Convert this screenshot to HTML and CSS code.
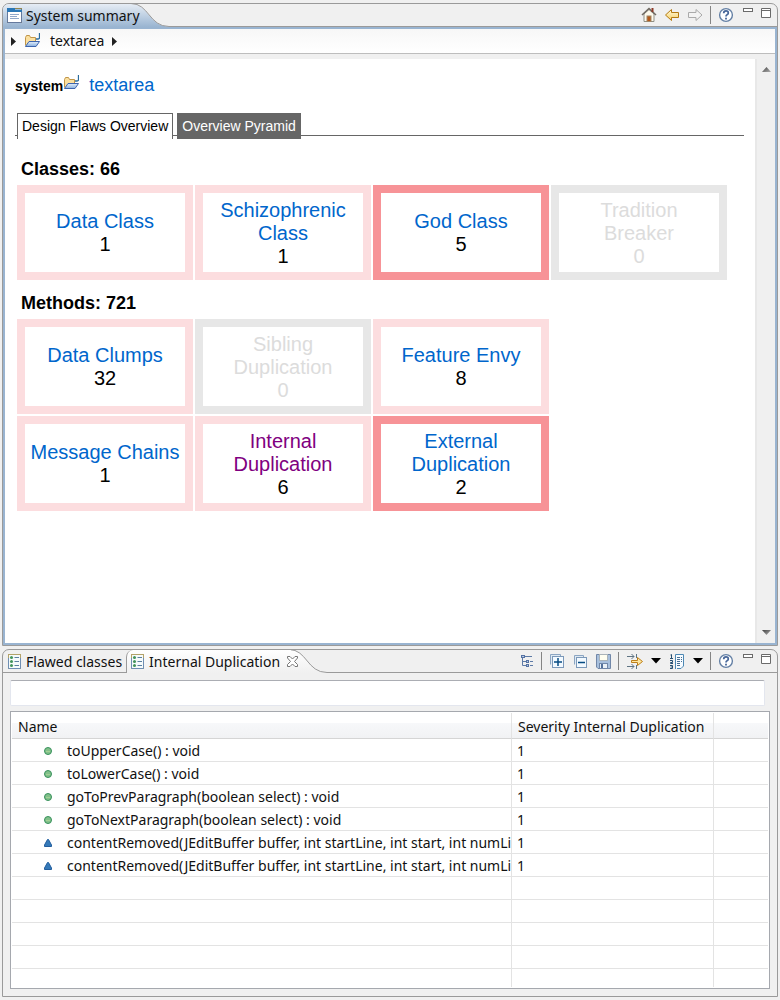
FILE: index.html
```html
<!DOCTYPE html>
<html lang="en">
<head>
<meta charset="utf-8">
<title>System summary</title>
<link rel="stylesheet" href="styles.css">
</head>
<body>
<svg class="defs" aria-hidden="true">
  <defs>
    <linearGradient id="tabBlue" x1="0" y1="0" x2="0" y2="1"><stop offset="0" stop-color="#e6edf5"/><stop offset="1" stop-color="#99b4d1"/></linearGradient>
    <linearGradient id="tabWhite" x1="0" y1="0" x2="0" y2="1"><stop offset="0" stop-color="#ffffff"/><stop offset="1" stop-color="#f0f0f0"/></linearGradient>
    <linearGradient id="folderFront" x1="0" y1="0" x2="0" y2="1"><stop offset="0" stop-color="#e4effb"/><stop offset="1" stop-color="#86aede"/></linearGradient>
    <linearGradient id="arrowGold" x1="0" y1="0" x2="0" y2="1"><stop offset="0" stop-color="#fffbe0"/><stop offset="1" stop-color="#f8cf62"/></linearGradient>
    <linearGradient id="scrollUp" x1="0" y1="0" x2="1" y2="1"><stop offset="0" stop-color="#404040"/><stop offset="1" stop-color="#b0b0b0"/></linearGradient>
    <symbol id="folder" viewBox="0 0 16 16">
      <path d="M1.500 12.500V4.500L2.500 2.500H5.500L6.500 4.500H11.500V8" fill="#fbe0a0" stroke="#c09548"/>
      <path d="M1.500 13.500L5 8.500H15.500L12 13.500Z" fill="url(#folderFront)" stroke="#3c64ae"/>
      <path d="M15.500 0V4.500Q15.500 6 14 6H12" fill="none" stroke="#2b6c9c" stroke-width="1.300"/>
    </symbol>
    <symbol id="list" viewBox="0 0 14 16">
      <rect x=".5" y=".5" width="12" height="14" fill="#f6fbfb" stroke="#b3a36a"/>
      <path d="M.5 4V14.500H12.500V4" fill="none" stroke="#6f8fb4"/>
      <circle cx="3.500" cy="3.500" r="1.500" fill="#43945b"/><circle cx="3.500" cy="7.500" r="1.500" fill="#43945b"/><circle cx="3.500" cy="11.500" r="1.500" fill="#43945b"/>
      <path d="M6.500 3.500H11M6.500 7.500H11M6.500 11.500H11" stroke="#5a7fa0"/>
    </symbol>
    <symbol id="help" viewBox="0 0 16 16">
      <circle cx="8" cy="8" r="6.400" fill="#fff" stroke="#6480a5" stroke-width="1.400"/>
      <path d="M5.700 6.300Q5.700 3.900 8 3.900Q10.300 3.900 10.300 5.900Q10.300 7 9 7.700Q8 8.200 8 9.500" fill="none" stroke="#47679a" stroke-width="1.700"/>
      <rect x="7.100" y="10.700" width="1.800" height="1.800" fill="#47679a"/>
    </symbol>
    <symbol id="minimize" viewBox="0 0 16 16"><rect x="2.500" y="1.500" width="9" height="3" fill="#fff" stroke="#6b6b6b"/></symbol>
    <symbol id="maximize" viewBox="0 0 16 16"><path d="M2.500 1.500H11.500V10.500H2.500Z" fill="#fff" stroke="#6b6b6b"/><path d="M2 3.500H12" stroke="#6b6b6b"/></symbol>
    <symbol id="method" viewBox="0 0 8 8"><circle cx="4" cy="4" r="3.500" fill="#82c08a" stroke="#37905c"/><path d="M2 4.500H6" stroke="#a2d094"/></symbol>
    <symbol id="package" viewBox="0 0 8 8"><path d="M3.500 .5H4.500L7.500 6V7.500H.5V6Z" fill="#3579b8" stroke="#235e9e"/></symbol>
  </defs>
</svg>

<section class="panel panel-main">
  <header class="bar">
    <button class="tab tab-blue"><svg class="tab-icon" width="15" height="15" viewBox="0 0 15 15"><rect x=".5" y=".5" width="14" height="14" fill="#fff" stroke="#94854f"/><path d="M.5 4V14.500H14.500V4" fill="none" stroke="#65799d"/><path d="M0 0H8V1.500H15V4H0Z" fill="#2b77b6"/><path d="M3 6.500H12M3 8.500H10M3 10.500H12" stroke="#91a8cb"/></svg>System summary</button>
    <svg class="curve" width="38" height="23" viewBox="0 0 38 23"><path d="M0 0C18 0 18 22.500 38 22.500V23H0Z" fill="url(#tabBlue)"/><path d="M0 -.5C18 -.5 18 22.500 38 22.500" fill="none" stroke="#9a9a9a"/></svg>
    <div class="tools">
      <button class="tool" aria-label="Home"><svg width="16" height="16" viewBox="0 0 16 16"><path d="M3 7L8 2.500L13 7V14.500H3Z" fill="#fdf9ec" stroke="#8f8f86"/><path d="M1 8L8 1.500L15 8" fill="none" stroke="#716b63" stroke-width="1.600"/><path d="M11.500 1V5" stroke="#8e3a28" stroke-width="2"/><rect x="6" y="9" width="4" height="5.500" fill="#b45819" stroke="#a08869"/></svg></button>
      <button class="tool" aria-label="Back"><svg width="16" height="16" viewBox="0 0 16 16"><path d="M1.500 8L7.500 2.500V5.500H14.500V10.500H7.500V13.500Z" fill="url(#arrowGold)" stroke="#b47a11"/></svg></button>
      <button class="tool" aria-label="Forward" disabled><svg width="16" height="16" viewBox="0 0 16 16"><path d="M15 8L9 2.500V5.500H1.500V10.500H9V13.500Z" fill="#f3f3f3" stroke="#aaa"/></svg></button>
      <span class="sep"></span>
      <button class="tool" aria-label="Help"><svg width="16" height="16"><use href="#help"/></svg></button>
      <span class="window-tools">
        <button class="tool" aria-label="Minimize"><svg width="16" height="16"><use href="#minimize"/></svg></button>
        <button class="tool" aria-label="Maximize"><svg width="16" height="16"><use href="#maximize"/></svg></button>
      </span>
    </div>
  </header>
  <div class="frame">
    <nav class="crumbs" aria-label="Breadcrumb">
      <svg width="5" height="9" viewBox="0 0 5 9"><path d="M0 0L5 4.500L0 9Z" fill="#222"/></svg>
      <svg class="crumb-icon" width="16" height="16"><use href="#folder"/></svg>
      <span>textarea</span>
      <svg width="5" height="9" viewBox="0 0 5 9"><path d="M0 0L5 4.500L0 9Z" fill="#222"/></svg>
    </nav>
    <div class="view">
      <main class="page">
        <h1 class="subject">system<svg width="16" height="16"><use href="#folder"/></svg><a href="#">textarea</a></h1>
        <div class="switch">
          <button class="switch-on">Design Flaws Overview</button>
          <button class="switch-off">Overview Pyramid</button>
        </div>
        <h2>Classes: 66</h2>
        <div class="cards cards-4">
          <div class="card"><a href="#">Data Class</a><span>1</span></div>
          <div class="card"><a href="#">Schizophrenic Class</a><span>1</span></div>
          <div class="card severe"><a href="#">God Class</a><span>5</span></div>
          <div class="card none"><span>Tradition Breaker</span><span>0</span></div>
        </div>
        <h2>Methods: 721</h2>
        <div class="cards cards-3">
          <div class="card"><a href="#">Data Clumps</a><span>32</span></div>
          <div class="card none"><span>Sibling Duplication</span><span>0</span></div>
          <div class="card"><a href="#">Feature Envy</a><span>8</span></div>
          <div class="card"><a href="#">Message Chains</a><span>1</span></div>
          <div class="card"><a class="seen" href="#">Internal Duplication</a><span>6</span></div>
          <div class="card severe"><a href="#">External Duplication</a><span>2</span></div>
        </div>
      </main>
      <div class="scroll">
        <button class="tool" aria-label="Scroll up"><svg width="9" height="5" viewBox="0 0 9 5"><path d="M0 5L4.500 0L9 5Z" fill="url(#scrollUp)"/></svg></button>
        <button class="tool" aria-label="Scroll down"><svg width="9" height="5" viewBox="0 0 9 5"><path d="M0 0L4.500 5L9 0Z" fill="url(#scrollUp)"/></svg></button>
      </div>
    </div>
  </div>
</section>

<section class="panel">
  <header class="bar">
    <button class="tab tab-idle"><svg class="tab-icon" width="14" height="16"><use href="#list"/></svg>Flawed classes</button>
    <button class="tab tab-white"><svg class="tab-icon" width="14" height="16"><use href="#list"/></svg>Internal Duplication<svg class="close" width="11" height="11" viewBox="0 0 11 11"><path d="M.5 .5H3L5.500 3L8 .5H10.500V2L7.500 5.500L10.500 8.500V10.500H8L5.500 8L3 10.500H.5V8.500L3.500 5.500L.5 2Z" fill="#fff" stroke="#777"/></svg></button>
    <svg class="curve" width="38" height="23" viewBox="0 0 38 23"><path d="M0 0C18 0 18 22.500 38 22.500V23H0Z" fill="url(#tabWhite)"/><path d="M0 -.5C18 -.5 18 22.500 38 22.500" fill="none" stroke="#9a9a9a"/></svg>
    <div class="tools">
      <button class="tool" aria-label="Hierarchy"><svg width="16" height="16" viewBox="0 0 16 16"><path d="M4.500 4V12.500H8M4.500 8.500H8M11 3.500H14M12 8.500H15M12 12.500H15" fill="none" stroke="#5d7aa6"/><g fill="#b9cbe4" stroke="#5572a3"><rect x="3.500" y="2.500" width="3" height="2"/><rect x="8.500" y="7.500" width="2" height="2"/><rect x="8.500" y="11.500" width="2" height="2"/></g><path d="M7 3.500H11" stroke="#5d7aa6"/></svg></button>
      <span class="sep"></span>
      <button class="tool" aria-label="Expand all"><svg width="16" height="16" viewBox="0 0 16 16"><path d="M1.500 11.500V1.500H11.500V4" fill="#dfe9f2" stroke="#8ba5c2"/><rect x="3.500" y="3.500" width="11" height="11" fill="#f2f9ff" stroke="#7b98b9"/><path d="M5 9H13M9 5V13" stroke="#064b83" stroke-width="1.500"/></svg></button>
      <button class="tool" aria-label="Collapse all"><svg width="16" height="16" viewBox="0 0 16 16"><path d="M2.500 11.500V2.500H11.500V4" fill="#dfe9f2" stroke="#8ba5c2"/><rect x="4.500" y="4.500" width="10" height="10" fill="#f2f9ff" stroke="#7b98b9"/><path d="M6 9.500H13" stroke="#064b83" stroke-width="1.500"/></svg></button>
      <button class="tool" aria-label="Save"><svg width="16" height="16" viewBox="0 0 16 16"><path d="M1.500 1.500H15.500V15.500H3L1.500 14Z" fill="#a8c0dd" stroke="#7187a8"/><rect x="4.500" y="1.500" width="8" height="6" fill="#fffef0" stroke="#aab3b8"/><rect x="4.500" y="10.500" width="8" height="5" fill="#eaf1f7" stroke="#7187a8"/><rect x="6" y="11" width="2" height="4" fill="#54719b"/></svg></button>
      <span class="sep"></span>
      <button class="tool" aria-label="Filters"><svg width="18" height="16" viewBox="0 0 18 16"><path d="M1 3.500H8M5.500 1L8 3.500L5.500 6M1 13.500H8M5.500 11L8 13.500L5.500 16M10.500 1V5M10.500 12V16" fill="none" stroke="#5e7484"/><path d="M5.500 7.500H11.500V4.500L16.500 8.500L11.500 12.500V9.500H5.500Z" fill="#ffe7a1" stroke="#bd7f19"/></svg></button>
      <button class="tool" aria-label="Filter menu"><svg width="10" height="6" viewBox="0 0 10 6"><path d="M0 0H10L5 5.500Z" fill="#000"/></svg></button>
      <button class="tool" aria-label="Sort"><svg width="18" height="16" viewBox="0 0 18 16"><path d="M2.500 2L3.500 1.500V5M2 5.500H5M2 7.500H4.500V9.500H2.500V10.500H5M2 12.500H4.500V15.500H2M2.500 14H4.500" fill="none" stroke="#254f72"/><path d="M7.500 16V1.500H15.500V13L13 15.500H9" fill="#f6fbff" stroke="#4c88b4"/><path d="M9 4.500H14M9 6.500H14M9 8.500H14M9 10.500H13M9 12.500H13" stroke="#466f94" stroke-dasharray="3 1"/></svg></button>
      <button class="tool" aria-label="Sort menu"><svg width="10" height="6" viewBox="0 0 10 6"><path d="M0 0H10L5 5.500Z" fill="#000"/></svg></button>
      <span class="sep"></span>
      <button class="tool" aria-label="Help"><svg width="16" height="16"><use href="#help"/></svg></button>
      <span class="window-tools">
        <button class="tool" aria-label="Minimize"><svg width="16" height="16"><use href="#minimize"/></svg></button>
        <button class="tool" aria-label="Maximize"><svg width="16" height="16"><use href="#maximize"/></svg></button>
      </span>
    </div>
  </header>
  <div class="results">
    <input class="filter" type="text" aria-label="Filter">
    <div class="table-box">
      <table>
        <colgroup><col><col class="col-severity"><col class="col-rest"></colgroup>
        <thead><tr><th>Name</th><th>Severity Internal Duplication</th><th></th></tr></thead>
        <tbody>
          <tr><td><svg width="8" height="8"><use href="#method"/></svg>toUpperCase() : void</td><td>1</td><td></td></tr>
          <tr><td><svg width="8" height="8"><use href="#method"/></svg>toLowerCase() : void</td><td>1</td><td></td></tr>
          <tr><td><svg width="8" height="8"><use href="#method"/></svg>goToPrevParagraph(boolean select) : void</td><td>1</td><td></td></tr>
          <tr><td><svg width="8" height="8"><use href="#method"/></svg>goToNextParagraph(boolean select) : void</td><td>1</td><td></td></tr>
          <tr><td><svg width="8" height="8"><use href="#package"/></svg>contentRemoved(JEditBuffer buffer, int startLine, int start, int numLi</td><td>1</td><td></td></tr>
          <tr><td><svg width="8" height="8"><use href="#package"/></svg>contentRemoved(JEditBuffer buffer, int startLine, int start, int numLi</td><td>1</td><td></td></tr>
          <tr><td></td><td></td><td></td></tr>
          <tr><td></td><td></td><td></td></tr>
          <tr><td></td><td></td><td></td></tr>
          <tr><td></td><td></td><td></td></tr>
          <tr class="tail"><td></td><td></td><td></td></tr>
        </tbody>
      </table>
    </div>
  </div>
</section>
</body>
</html>
```
FILE: styles.css
```css
* { box-sizing: border-box; }
body {
  margin: 0;
  padding: 3px 2px;
  min-height: 100vh;
  display: flex;
  flex-direction: column;
  gap: 3px;
  background: #f0f0f0;
  color: #111;
  font: 14px/20px "Noto Sans", "Open Sans", sans-serif;
}
svg { display: block; flex: none; }
.defs { position: absolute; width: 0; height: 0; }
button { font: inherit; color: inherit; }

.panel {
  border: 1px solid #9a9a9a;
  border-radius: 7px 7px 0 0;
  overflow: hidden;
}
.panel-main {
  flex: 1;
  display: flex;
  flex-direction: column;
}

/* Tab strip */
.bar { display: flex; height: 23px; }
.tab {
  display: flex;
  align-items: center;
  gap: 4px;
  height: 23px;
  padding: 0 0 0 4px;
  border: 0;
  background: none;
  white-space: nowrap;
  position: relative;
  z-index: 1;
}
.tab-blue { background: linear-gradient(#e6edf5, #99b4d1); background-size: calc(100% - 9px) 100%; background-repeat: no-repeat; }
.tab-white {
  border-left: 1px solid #9a9a9a;
  border-radius: 7px 0 0 0;
  background: linear-gradient(#fff, #f0f0f0) no-repeat;
  background-size: calc(100% - 7px) 100%;
}
.tab-idle { padding: 1px 4px 0 5px; border-bottom: 1px solid #9a9a9a; }
.close { margin-left: 3px; }
.curve { margin-left: -9px; }
.tools {
  flex: 1;
  display: flex;
  align-items: center;
  justify-content: flex-end;
  gap: 7px;
  padding-right: 2px;
  border-bottom: 1px solid #9a9a9a;
}
.tool { padding: 0; border: 0; background: none; }
.sep { width: 1px; height: 18px; background: #858585; }
.window-tools { display: flex; gap: 2px; }

/* Main view */
.frame {
  flex: 1;
  display: flex;
  flex-direction: column;
  border: 2px solid #99b4d1;
}
.crumbs {
  display: flex;
  align-items: center;
  gap: 8px;
  height: 25px;
  padding: 0 6px;
  border-bottom: 1px solid #bdbdbd;
  background: linear-gradient(#f7f7f7, #fff);
}
.crumb-icon { margin-right: 2px; }
.view { flex: 1; display: flex; margin-top: 5px; }
.page {
  flex: 1;
  padding: 14px 11px 16px 10px;
  background: #fff;
  font-family: "Liberation Sans", Arial, sans-serif;
}
.scroll {
  display: flex;
  flex-direction: column;
  justify-content: space-between;
  align-items: center;
  width: 20px;
  padding: 8px 0;
  border-left: 2px solid #e8e8e8;
}
a { color: #0066cc; text-decoration: none; }
.subject {
  display: flex;
  align-items: baseline;
  margin: 0;
  color: #000;
  font-size: 14px;
  line-height: 24px;
}
.subject svg { align-self: flex-start; margin-top: 2px; }
.subject a { margin-left: 10px; font-size: 18px; font-weight: 400; }
.switch {
  display: flex;
  align-items: flex-start;
  gap: 4px;
  height: 23px;
  margin-top: 15px;
  padding-left: 2px;
  border-bottom: 1px solid #666;
}
.switch button {
  height: 26px;
  padding: 0 4px;
  border: 1px solid #666;
  background: #666;
  color: #fff;
}
.switch .switch-on { padding-bottom: 1px; border-bottom: 0; background: #fff; color: #000; }
h2 {
  margin: 13px 0 6px 6px;
  color: #000;
  font-size: 18px;
  line-height: 20px;
}
.switch + h2 { margin-top: 23px; }
.cards { display: grid; gap: 2px; margin-left: 2px; }
.cards-4 { grid-template-columns: repeat(4, minmax(0, 176px)); }
.cards-3 { grid-template-columns: repeat(3, minmax(0, 176px)); }
.card {
  display: flex;
  flex-direction: column;
  justify-content: center;
  min-height: 95px;
  padding: 1px 5px 0;
  border: 8px solid #fcdddf;
  color: #000;
  font-size: 20px;
  line-height: 23px;
  text-align: center;
}
.severe { border-color: #f79397; }
.none { border-color: #e7e7e7; color: #dcdcdc; }
.seen { color: #800080; }

/* Results */
.results { padding: 7px; }
.filter {
  display: block;
  width: calc(100% - 5px);
  height: 26px;
  margin-bottom: 5px;
  border: 1px solid #e3e6ee;
  border-top-color: #abadb3;
  border-radius: 2px;
  background: #fff;
  font: inherit;
}
.table-box { padding: 1px; border: 1px solid #a5a8ae; background: #fff; }
table { width: 100%; table-layout: fixed; border-collapse: separate; border-spacing: 0; }
.col-severity { width: 202px; }
.col-rest { width: 54px; }
th, td {
  height: 23px;
  padding: 2px 0 0 5px;
  border-bottom: 1px solid #e3e3e3;
  border-right: 1px solid #e3e3e3;
  overflow: hidden;
  font-weight: 400;
  line-height: 20px;
  text-align: left;
  white-space: nowrap;
}
th {
  height: 26px;
  padding-left: 6px;
  border-bottom-color: #d5d5d5;
  background: linear-gradient(#fff 40%, #f7f8fa 40%, #f1f2f4);
}
th:last-child, td:last-child { border-right: 0; }
td svg { display: inline-block; margin: 0 15px 0 27px; vertical-align: 1px; }
.tail td { height: 18px; padding: 0; border-bottom: 0; }
```
